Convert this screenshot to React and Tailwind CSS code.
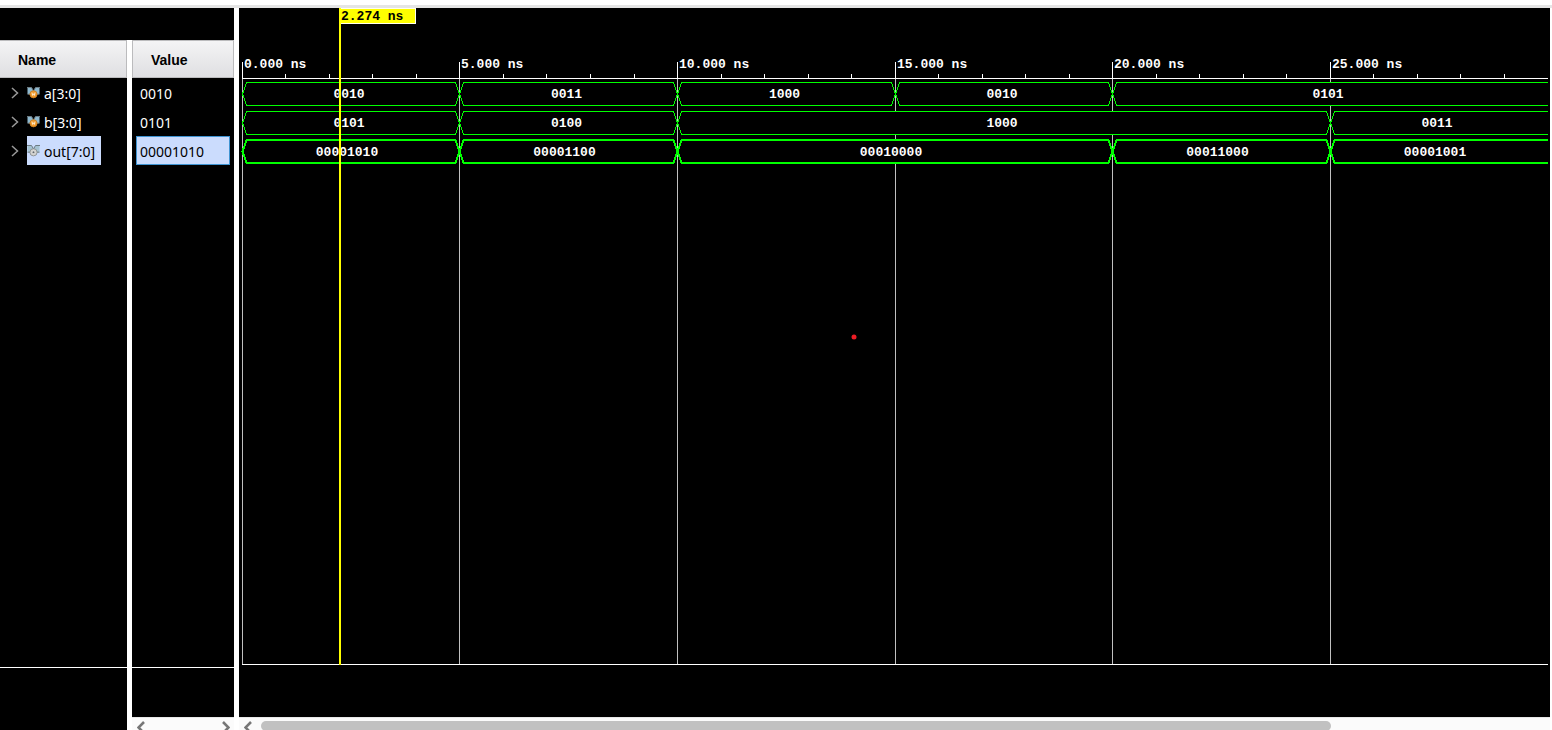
import React from "react";

const NS_PX = 43.52;
const ORIGIN = 2.85;
const xAt = (ns) => Math.round(ORIGIN + ns * NS_PX);
const FAR = 6000;

const signals = [
  {
    name: "a[3:0]",
    value: "0010",
    top: 74.5,
    segments: [[0, 5, "0010"], [5, 10, "0011"], [10, 15, "1000"], [15, 20, "0010"], [20, 30, "0101"]],
  },
  {
    name: "b[3:0]",
    value: "0101",
    top: 103.5,
    segments: [[0, 5, "0101"], [5, 10, "0100"], [10, 25, "1000"], [25, 30, "0011"]],
  },
  {
    name: "out[7:0]",
    value: "00001010",
    top: 132,
    selected: true,
    segments: [[0, 5, "00001010"], [5, 10, "00001100"], [10, 20, "00010000"], [20, 25, "00011000"], [25, 30, "00001001"]],
  },
];

function BusIcon({ muted }) {
  const disc = muted ? "#d2d2cf" : "#f09a2c";
  const rim = muted ? "#83888a" : "#c97a1c";
  const wing = muted ? "#a5c3d3" : "#8fb9cf";
  return (
    <svg width="14" height="14" viewBox="0 0 14 14" aria-hidden="true" className="shrink-0">
      <path d="M0.5 1.5H4.5L6.5 5V8.5H3.5L0.5 8Z" fill={wing} />
      <path d="M12.5 1.5H8.5L6.5 5V8.5H9.5L12.5 8Z" fill={wing} />
      <path d="M0 1.5H4.5L6.5 5L8.5 1.5H13" fill="none" stroke="#6d7b83" />
      <path d="M0.5 8.2H3M10 8.2H12.5" fill="none" stroke="#6d7b83" />
      <circle cx="6.5" cy="8.3" r="3.6" fill={disc} stroke={rim} strokeWidth="0.8" />
      {muted ? (
        <circle cx="6.5" cy="8.3" r="1.3" fill="#60666a" stroke="#f4f4f4" strokeWidth="0.6" />
      ) : (
        <path d="M5 6.6L5.6 9.4L6.5 7.8L7.4 9.4L8 6.6" fill="none" stroke="#fff3dc" strokeWidth="0.9" />
      )}
    </svg>
  );
}

function Chevron({ left }) {
  return (
    <svg width="8" height="14" viewBox="0 0 8 14" aria-hidden="true">
      <path d={left ? "M7 1L1.5 6.5L7 12" : "M1 1L6.5 6.5L1 12"} fill="none" stroke="#777" strokeWidth="2.6" />
    </svg>
  );
}

function ColumnHeader({ children }) {
  return (
    <h2 className="flex h-[38px] shrink-0 items-center border border-[#bbbbbd] bg-linear-to-b from-[#f4f4f5] to-[#dfdfe2] px-[18px] pt-[2px] font-['Liberation_Sans',sans-serif] text-sm font-bold text-black first:in-[.names]:border-l-0">
      {children}
    </h2>
  );
}

function Bus({ top, segments, selected }) {
  const height = 23;
  const mid = top + height / 2;
  const bottom = top + height;
  return (
    <g>
      {segments.map(([from, to, label], i) => {
        const a = xAt(from) + 0.5;
        const b = xAt(to) + 0.5;
        const open = i === segments.length - 1;
        const d = open
          ? `M${FAR} ${top}H${a + 4}L${a} ${mid}L${a + 4} ${bottom}H${FAR}`
          : `M${a} ${mid}L${a + 4} ${top}H${b - 4}L${b} ${mid}L${b - 4} ${bottom}H${a + 4}Z`;
        return (
          <g key={from}>
            <path d={d} fill="#000" stroke="#00ff00" strokeWidth={selected ? 2 : 1} shapeRendering="crispEdges" />
            <text x={(a + b) / 2 - label.length / 2} y={Math.round(mid) + 4} textAnchor="middle" fill="#fff">
              {label}
            </text>
          </g>
        );
      })}
    </g>
  );
}

function Waveform() {
  const cursor = xAt(2.274);
  const major = [0, 5, 10, 15, 20, 25];
  const ticks = Array.from({ length: 30 }, (_, i) => i);
  return (
    <svg
      role="img"
      aria-label="Signal waveforms"
      className="block h-full w-full overflow-hidden font-['Liberation_Mono',monospace] text-[13px] font-bold"
    >
      {major.map((t) => (
        <line key={t} x1={xAt(t) + 0.5} x2={xAt(t) + 0.5} y1="71" y2="100%" stroke="#c0c0c0" />
      ))}
      {ticks.map((t) => (
        <line key={t} x1={xAt(t) + 0.5} x2={xAt(t) + 0.5} y1={t % 5 ? 66 : 54} y2="71" stroke="#fff" />
      ))}
      <line x1={xAt(0)} x2="100%" y1="70.5" y2="70.5" stroke="#fff" />
      {major.map((t) => (
        <text key={t} x={xAt(t) + 2} y="60" fill="#fff">
          {t.toFixed(3)} ns
        </text>
      ))}
      {signals.map((s) => (
        <Bus key={s.name} {...s} />
      ))}
      <svg x={xAt(0)} y="0" width="100%" height="100%">
        <rect x="0" y="100%" width="100%" height="1" transform="translate(0 -1)" fill="#fff" />
      </svg>
      <circle cx="615" cy="329" r="2.5" fill="#ed1c24" />
      <rect x={cursor - 2} y="0" width="2" height="100%" fill="#ffff00" />
      <rect x={cursor - 1.5} y="0.5" width="76" height="15" fill="#ffff00" stroke="#fffff0" />
      <rect x={cursor - 2} y="0" width="2" height="20" fill="#ffff00" />
      <text x={cursor} y="12" fill="#000">
        2.274 ns
      </text>
    </svg>
  );
}

export default function App() {
  return (
    <div className="flex h-screen flex-col overflow-hidden bg-white font-['Noto_Sans',sans-serif] text-sm text-white">
      <div className="h-2 shrink-0 border-b-[3px] border-[#e5e5e5] bg-white" />
      <main className="flex min-h-0 flex-1 gap-[5px] pr-[2px]">
        <section className="flex w-[234px] shrink-0 flex-col">
          <div className="h-8 shrink-0 bg-black" />
          <div className="flex min-h-0 flex-1 gap-[5px]">
            <div className="names flex w-[127px] flex-col bg-black">
              <ColumnHeader>Name</ColumnHeader>
              <ul className="flex-1 border-b border-white">
                {signals.map((s) => (
                  <li key={s.name} className="flex h-[29px] items-center pl-[11px]">
                    <button type="button" aria-label={`Expand ${s.name}`} className="flex w-4 items-center">
                      <svg width="8" height="12" viewBox="0 0 8 12" aria-hidden="true">
                        <path d="M1 1L6.5 6L1 11" fill="none" stroke="#999" strokeWidth="1.5" />
                      </svg>
                    </button>
                    <span
                      className={`flex h-full items-center gap-[3px] pr-[6px] ${s.selected ? "bg-[#cbdcfd] text-black" : ""}`}
                    >
                      <BusIcon muted={s.selected} />
                      <span className="pt-[2px]">{s.name}</span>
                    </span>
                  </li>
                ))}
              </ul>
              <div className="h-[62px] shrink-0" />
            </div>
            <div className="flex flex-1 flex-col bg-black">
              <ColumnHeader>Value</ColumnHeader>
              <ul className="flex-1 border-b border-white px-1">
                {signals.map((s) => (
                  <li
                    key={s.name}
                    className={`flex h-[29px] items-center border px-[3px] pt-[2px] ${s.selected ? "border-[#3f94d2] bg-[#cbdcfd] text-black" : "border-transparent"}`}
                  >
                    {s.value}
                  </li>
                ))}
              </ul>
              <div className="h-[49px] shrink-0" />
              <div className="flex h-[13px] shrink-0 items-start justify-between overflow-hidden border-t border-[#e8e8e8] bg-[#fbfbfb] px-1 pt-[3px]">
                <button type="button" aria-label="Scroll values left" className="pl-px">
                  <Chevron left />
                </button>
                <button type="button" aria-label="Scroll values right">
                  <Chevron />
                </button>
              </div>
            </div>
          </div>
        </section>
        <section className="flex min-w-0 flex-1 flex-col bg-black">
          <div className="min-h-0 flex-1 pr-[2px]">
            <Waveform />
          </div>
          <div className="h-[52px] shrink-0" />
          <div className="flex h-[13px] shrink-0 items-start overflow-hidden border-t border-[#e8e8e8] bg-[#fbfbfb] pt-[3px]">
            <button type="button" aria-label="Scroll waveform left" className="w-[22px] shrink-0 pl-[5px]">
              <Chevron left />
            </button>
            <div className="flex-1">
              <div className="h-[10px] w-[83%] rounded-full bg-[#c1c1c1]" />
            </div>
          </div>
        </section>
      </main>
    </div>
  );
}
